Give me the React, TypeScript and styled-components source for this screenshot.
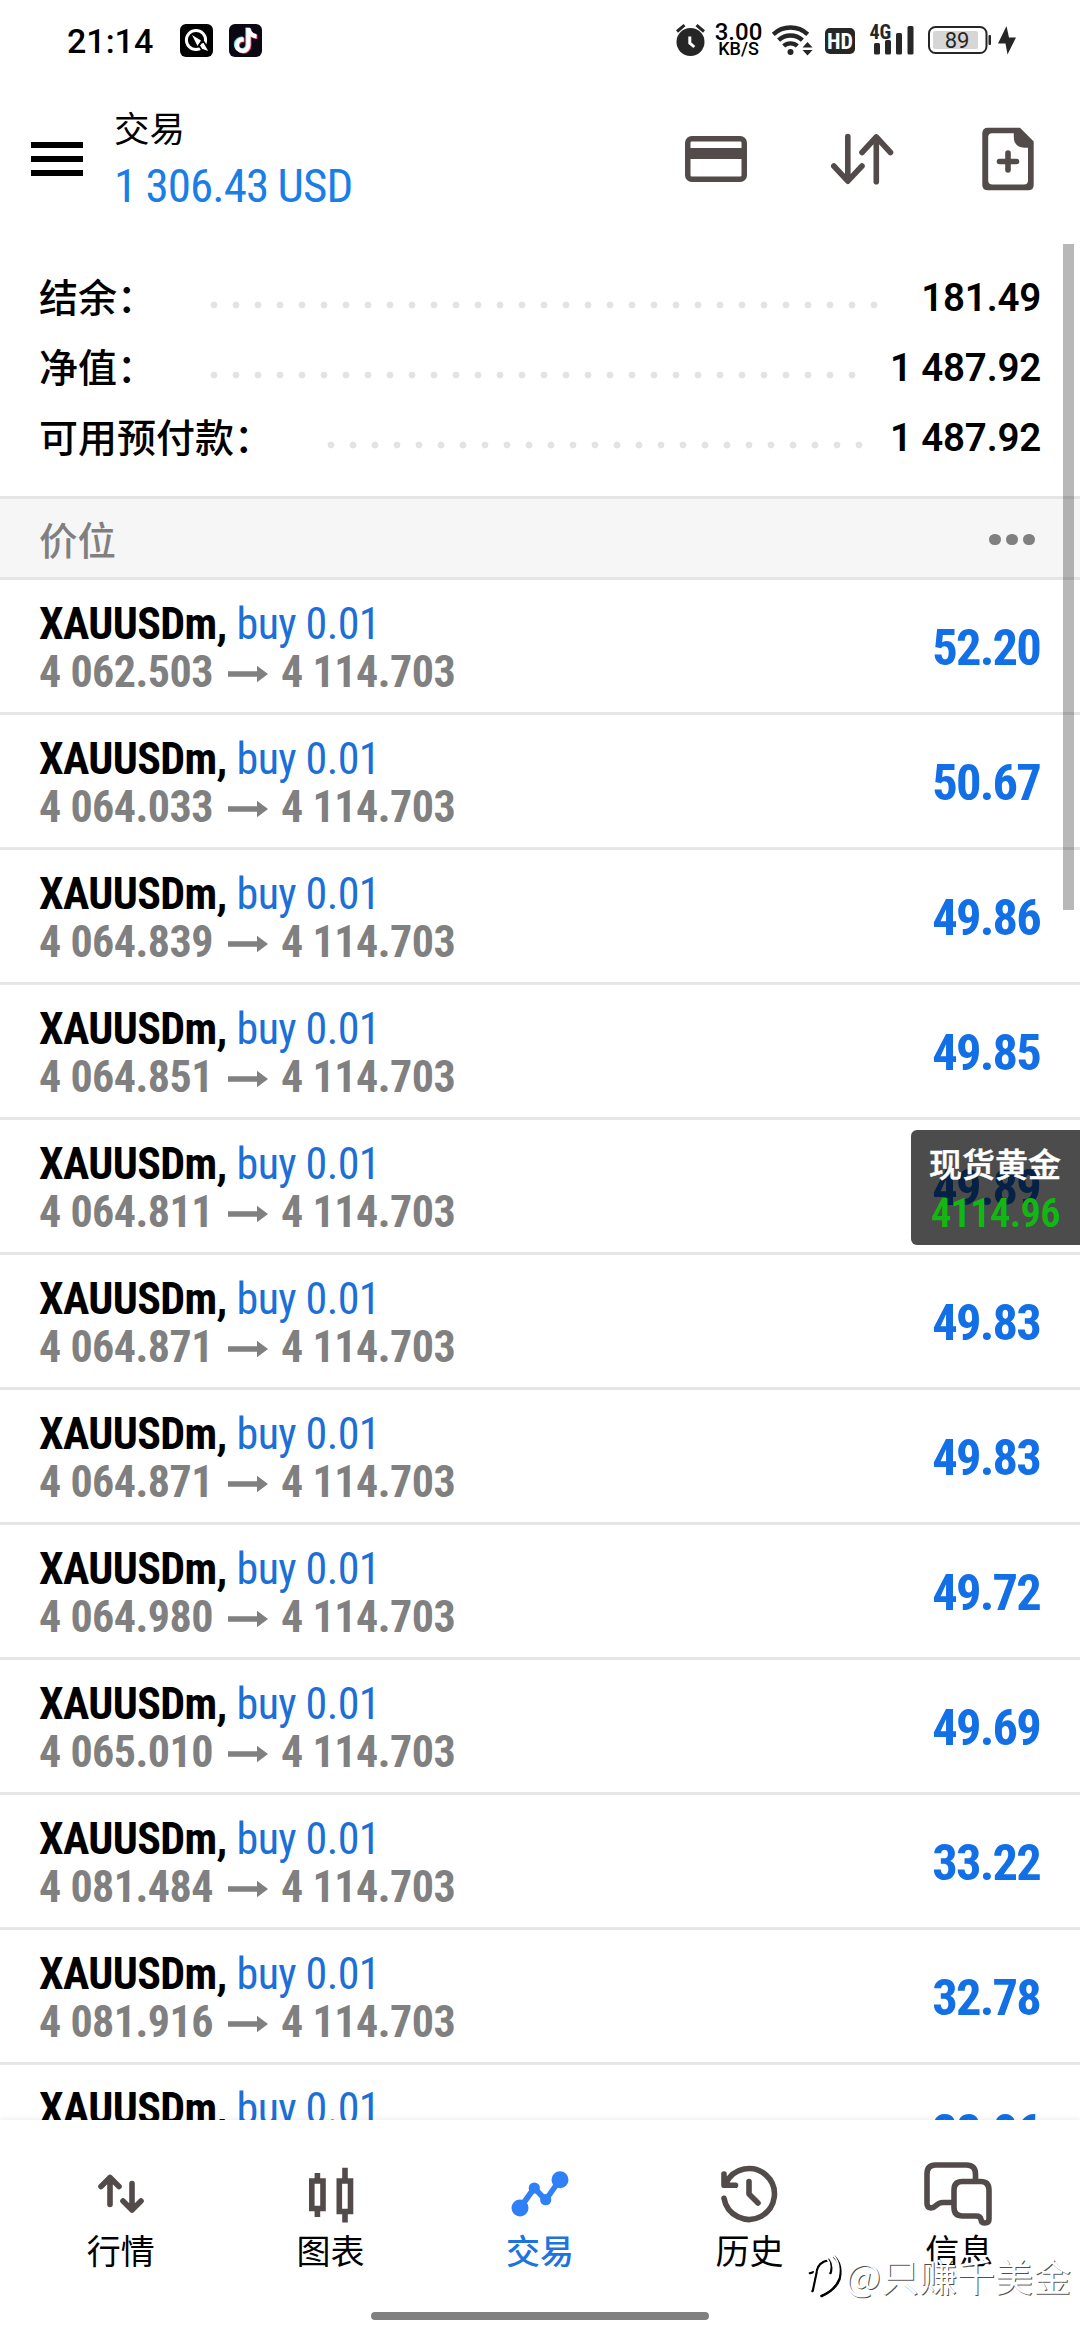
import React from "react";
import styled, { createGlobalStyle } from "styled-components";
import { FaTiktok } from "react-icons/fa6";

const CJK = `"Noto Sans CJK SC", sans-serif`;
const ROBOTO = `Roboto, "Noto Sans CJK SC", sans-serif`;
const CONDENSED = `"Roboto Condensed", Roboto, sans-serif`;
const BROWN = "#534b49";
const INK = "#262626";

const GlobalStyle = createGlobalStyle`
  * { box-sizing: border-box; }
  body { margin: 0; background: #fff; }
  svg { display: block; flex: none; overflow: visible; }
`;

const Screen = styled.div`
  position: relative;
  width: 1080px;
  height: 2340px;
  display: flex;
  flex-direction: column;
  overflow: hidden;
  background: #fff;
  font-family: ${ROBOTO};
  color: #000;
`;

/* Status bar */
const StatusBar = styled.div`
  height: 80px;
  padding: 0 64px 0 67px;
  display: flex;
  align-items: center;
  justify-content: space-between;
`;
const StatusGroup = styled.div<{ $gap: number }>`
  display: flex;
  align-items: center;
  gap: ${(p) => p.$gap}px;
`;
const Clock = styled.span`
  width: 97px;
  font-size: 34px;
  font-weight: 460;
  line-height: 40px;
  padding-top: 2px;
`;
const Speed = styled.div`
  width: 47px;
  display: flex;
  flex-direction: column;
  align-items: center;
  font-weight: 500;
  white-space: nowrap;
`;
const SpeedValue = styled.span`
  font-size: 24px;
  line-height: 18px;
`;
const SpeedUnit = styled.span`
  font-size: 18px;
  line-height: 16px;
`;

/* Header */
const Header = styled.header`
  height: 158px;
  padding: 0 46px 0 31px;
  display: flex;
  align-items: center;
`;
const MenuButton = styled.div`
  width: 52px;
  display: flex;
  flex-direction: column;
  gap: 8.5px;
`;
const MenuLine = styled.div`
  height: 5.7px;
  background: #000;
`;
const TitleBlock = styled.div`
  flex: 1;
  margin-left: 31px;
`;
const Title = styled.div`
  font: 400 35.5px/46px ${CJK};
  margin-bottom: 8px;
`;
const Profit = styled.div`
  font: 450 47px/56px ${CONDENSED};
  letter-spacing: -0.95px;
  word-spacing: -0.5px;
  color: #1a7ee6;
`;
const Actions = styled.div`
  display: flex;
  align-items: center;
  gap: 84px;
`;

/* Account summary */
const Content = styled.main`
  flex: 1;
  min-height: 0;
  overflow: hidden;
`;
const Summary = styled.section`
  height: 258px;
  padding: 24px 39px 0;
`;
const SummaryRow = styled.div`
  height: 70px;
  display: flex;
  align-items: center;
`;
const SummaryLabel = styled.span`
  font: 500 39px/66px ${CJK};
  padding-bottom: 4px;
`;
const Leader = styled.span<{ $dots: number }>`
  width: ${(p) => p.$dots * 22}px;
  height: 8px;
  margin: 15px 0 0 47px;
  background: radial-gradient(circle at center, #e3e3e3 3px, transparent 3.8px) 0 0 / 22px 8px repeat-x;
`;
const SummaryValue = styled.span`
  margin-left: auto;
  font-size: 38.5px;
  font-weight: 620;
  line-height: 70px;
  letter-spacing: -0.2px;
  padding-top: 2px;
`;

/* Positions */
const SectionBar = styled.div`
  height: 84px;
  padding: 0 45px 0 39px;
  display: flex;
  align-items: center;
  justify-content: space-between;
  background: #f6f6f6;
  border-top: 3px solid #e5e5e5;
  border-bottom: 3px solid #e5e5e5;
  font: 500 38.5px/70px ${CJK};
  color: #808080;
`;
const Dots = styled.div`
  display: flex;
  gap: 5.4px;
  padding-top: 3px;
`;
const Dot = styled.i`
  width: 11.6px;
  height: 11.6px;
  border-radius: 50%;
  background: #808080;
`;
const Position = styled.div`
  height: 135px;
  padding: 20px 40px 0 39px;
  display: flex;
  justify-content: space-between;
  border-bottom: 3px solid #e6e6e6;
  font-family: ${CONDENSED};
`;
const PositionLine = styled.div`
  display: flex;
  align-items: center;
  font-size: 44px;
  line-height: 48px;
  white-space: nowrap;
`;
const Symbol = styled.span`
  font-weight: 700;
  letter-spacing: -0.65px;
`;
const Side = styled.span`
  margin-left: 10px;
  font-weight: 440;
  letter-spacing: -0.6px;
  color: #1b6fd6;
`;
const Prices = styled(PositionLine)`
  font-weight: 700;
  letter-spacing: -0.5px;
  color: #808080;
`;
const PriceArrow = styled.svg`
  margin: 3px 13px 0 15px;
`;
const Pnl = styled.div`
  font-size: 50.5px;
  font-weight: 700;
  line-height: 96px;
  letter-spacing: -1.8px;
  color: #126fe6;
`;

/* Overlays */
const ScrollThumb = styled.div`
  position: absolute;
  right: 6px;
  top: 244px;
  width: 11px;
  height: 666px;
  background: rgba(0, 0, 0, 0.28);
`;
const QuoteWidget = styled.div`
  position: absolute;
  right: 0;
  top: 1130px;
  width: 169px;
  height: 115px;
  padding: 9px 0 0 18px;
  border-radius: 6px 0 0 6px;
  background: rgba(0, 0, 0, 0.7);
`;
const QuoteName = styled.div`
  font: 500 33px/48px ${CJK};
  -webkit-text-stroke: 0.5px #fff;
  color: #fff;
`;
const QuotePrice = styled.div`
  font: 600 40.5px/50px ${CONDENSED};
  letter-spacing: -0.7px;
  padding: 1px 0 0 2px;
  color: #12b812;
`;

/* Bottom navigation */
const Nav = styled.nav`
  position: relative;
  height: 220px;
  padding: 42px 16px 0;
  display: grid;
  grid-template-columns: repeat(5, 1fr);
  align-content: start;
  background: #fff;
  box-shadow: 0 -1px 6px rgba(0, 0, 0, 0.08);
`;
const Tab = styled.div<{ $active?: boolean }>`
  display: flex;
  flex-direction: column;
  align-items: center;
  font: ${(p) => (p.$active ? 500 : 400)} 34px/46px ${CJK};
  color: ${(p) => (p.$active ? "#1f73dc" : "#000")};
`;
const HomeBar = styled.div`
  position: absolute;
  left: 371px;
  bottom: 20px;
  width: 338px;
  height: 8px;
  border-radius: 4px;
  background: #808080;
`;
const Watermark = styled.div`
  position: absolute;
  right: 9px;
  bottom: 37px;
  display: flex;
  align-items: center;
  font: 400 38px/56px ${CJK};
  color: #fff;
  text-shadow: 1px 1px 0 rgba(0, 0, 0, 0.7);
  white-space: nowrap;
`;

const AppQ = () => (
  <svg width="33" height="33" viewBox="0 0 33 33">
    <rect width="33" height="33" rx="6" fill="#000" />
    <circle cx="16" cy="16" r="9.6" fill="none" stroke="#fff" strokeWidth="3" />
    <path d="M12 11l9 5.5-3.5 5.5z" fill="#fff" />
    <path d="M19 21.5q2-3.5 5-3.5l6 10.5-8.5-3z" fill="#fff" stroke="#000" strokeWidth="1.6" />
  </svg>
);
const AppNote = () => (
  <svg width="33" height="33" viewBox="0 0 33 33">
    <rect width="33" height="33" rx="6" fill="#0b0814" />
    <FaTiktok x="3.2" y="3.4" size={25} color="#4fdcd8" />
    <FaTiktok x="5" y="4.8" size={25} color="#e83a63" />
    <FaTiktok x="4.1" y="4.1" size={25} color="#fff" />
  </svg>
);
const Alarm = () => (
  <svg width="29" height="36" viewBox="0 0 29 36">
    <circle cx="14.5" cy="20" r="14" fill={INK} />
    <path d="M1 9.5L8.5 3.2M28 9.5L20.5 3.2" stroke={INK} strokeWidth="3" fill="none" />
    <path d="M13.8 14.5v6.5l4.5 4" stroke="#fff" strokeWidth="3" fill="none" />
  </svg>
);
const Wifi = () => (
  <svg width="41" height="36" viewBox="0 0 41 36">
    <g fill="none" stroke={INK} strokeWidth="4.4">
      <path d="M1.3 12.3a25.3 25.3 0 0 1 34.4 0" />
      <path d="M6.6 18.2a17.5 17.5 0 0 1 23.8 0" />
      <path d="M11.7 24a10 10 0 0 1 13.6 0" />
    </g>
    <circle cx="18.5" cy="30" r="3" fill={INK} />
    <path d="M35.5 20l5 5.5h-10zM35.5 33.5l5-5.5h-10z" fill={INK} />
  </svg>
);
const HdText = styled.span`
  width: 30px;
  height: 26px;
  margin: 2px 0 0 2px;
  border-radius: 5px;
  background: ${INK};
  color: #fff;
  font: 700 22px/27px ${CONDENSED};
  text-align: center;
`;
const Signal = () => (
  <svg width="49" height="36" viewBox="0 0 49 36">
    <text x="4.5" y="16.5" fontFamily="Roboto Condensed" fontWeight="700" fontSize="20" fill={INK}>4G</text>
    <g fill={INK}>
      <rect x="9" y="21" width="6" height="11.5" rx="1.5" />
      <rect x="20" y="18" width="6" height="14.5" rx="1.5" />
      <rect x="31" y="11" width="6" height="21.5" rx="1.5" />
      <rect x="42.5" y="4" width="6" height="28.5" rx="1.5" />
    </g>
  </svg>
);
const Battery = () => (
  <svg width="64" height="36" viewBox="0 0 64 36">
    <rect x="5" y="5" width="57.5" height="26" rx="6.5" fill="none" stroke={INK} strokeWidth="2" />
    <rect x="9" y="9" width="45" height="18" rx="2" fill="#d6d6d6" />
    <rect x="64.5" y="13" width="2.5" height="10" rx="1" fill={INK} />
    <text x="33" y="26" textAnchor="middle" fontFamily="Roboto" fontWeight="450" fontSize="22" fill={INK}>89</text>
  </svg>
);
const Bolt = () => (
  <svg width="18" height="36" viewBox="0 0 18 36">
    <path d="M8.5 4L0 21.5h7.5L9.5 32.5 18 15.5h-7z" fill={INK} />
  </svg>
);

const CardIcon = () => (
  <svg width="62" height="46" viewBox="0 0 62 46">
    <rect x="2.75" y="2.75" width="56.5" height="40.5" rx="4" fill="none" stroke={BROWN} strokeWidth="5.5" />
    <rect x="3" y="12" width="56" height="11" fill={BROWN} />
  </svg>
);
const SortIcon = () => (
  <svg width="62" height="52" viewBox="0 0 62 52" fill="none" stroke={BROWN} strokeWidth="5.6" strokeLinecap="round" strokeLinejoin="round">
    <path d="M16.8 3.5v44.5M2.8 33l14 15.2L31 33" />
    <path d="M45.3 48.7V4M31 19.5L45.3 4l14.2 15.5" />
  </svg>
);
const NewOrderIcon = () => (
  <svg width="57" height="64" viewBox="-5 0 57 64">
    <path
      fill={BROWN}
      fillRule="evenodd"
      d="M6 .7H38L51.7 14.5V58q0 5.3-5.5 5.3H6Q.3 63.3.3 58V6.5Q.3.7 6 .7zM10 6.2Q6.2 6.2 6.2 10V53.5Q6.2 57.5 10.5 57.5H42Q46 57.5 46 53.5V20.7H42Q31.8 20 31.8 10V6.2z"
    />
    <path d="M17.5 34.5h17M26 26v17" stroke={BROWN} strokeWidth="5.6" strokeLinecap="round" />
  </svg>
);

const Icon = ({ children, color = BROWN }: { children: React.ReactNode; color?: string }) => (
  <svg width="70" height="65" viewBox="-5 0 70 65" fill="none" stroke={color} strokeWidth="5.6" strokeLinecap="round" strokeLinejoin="round">
    {children}
  </svg>
);

const tabs = [
  {
    label: "行情",
    icon: (
      <Icon>
        <path d="M19 42.5V15.5M10 24.5l9-9 9 9M41 21.5V48M32 39l9 9 9-9" />
      </Icon>
    ),
  },
  {
    label: "图表",
    icon: (
      <Icon>
        <g strokeLinecap="butt" strokeLinejoin="miter">
          <path d="M17.4 11v6M17.4 48v7M45 5.7V17M45 51v9.5" />
          <path d="M11.8 19h11.2v27.5H11.8zM39.3 19h11.2v30.5H39.3z" />
        </g>
      </Icon>
    ),
  },
  {
    label: "交易",
    active: true,
    icon: (
      <Icon color="#2f80f7">
        <path d="M10 46L24.3 26l11.4 12L50 17.7" />
        <g fill="#2f80f7" stroke="none">
          <circle cx="10" cy="46" r="8.5" />
          <circle cx="24.3" cy="26" r="5.6" />
          <circle cx="35.7" cy="37.7" r="5.6" />
          <circle cx="50" cy="17.7" r="8.5" />
        </g>
      </Icon>
    ),
  },
  {
    label: "历史",
    icon: (
      <Icon>
        <path d="M4 36.3A25.4 25.4 0 1 0 5.9 21.5M4 12v11.3h11.5M29 19.5V32l9 9" />
      </Icon>
    ),
  },
  {
    label: "信息",
    icon: (
      <Icon>
        <g transform="translate(-5 0)">
          <path d="M51.5 17v-5q0-9-9-9H11.5Q3 3 3 12v29.5q0 4 4 4.5 2.5 0 5-2.500 3-3 7-3H28" />
          <path d="M38.5 19.5h18q8.5 0 8.5 8.5v29q0 4-4 4-3.5 0-4-3.5-.5-3.5-5-3.5H38.5Q30 54 30 45.5V28q0-8.5 8.5-8.5z" />
        </g>
      </Icon>
    ),
  },
];

const summary = [
  { label: "结余：", value: "181.49", dots: 31 },
  { label: "净值：", value: "1 487.92", dots: 30 },
  { label: "可用预付款：", value: "1 487.92", dots: 25 },
];

const positions = [
  ["4 062.503", "52.20"],
  ["4 064.033", "50.67"],
  ["4 064.839", "49.86"],
  ["4 064.851", "49.85"],
  ["4 064.811", "49.89"],
  ["4 064.871", "49.83"],
  ["4 064.871", "49.83"],
  ["4 064.980", "49.72"],
  ["4 065.010", "49.69"],
  ["4 081.484", "33.22"],
  ["4 081.916", "32.78"],
  ["4 081.840", "32.86"],
];

export default function App() {
  return (
    <Screen>
      <GlobalStyle />
      <StatusBar>
        <StatusGroup $gap={16}>
          <Clock>21:14</Clock>
          <AppQ />
          <AppNote />
        </StatusGroup>
        <StatusGroup $gap={10}>
          <Alarm />
          <Speed>
            <SpeedValue>3.00</SpeedValue>
            <SpeedUnit>KB/S</SpeedUnit>
          </Speed>
          <Wifi />
          <HdText>HD</HdText>
          <Signal />
          <Battery />
          <Bolt />
        </StatusGroup>
      </StatusBar>

      <Header>
        <MenuButton>
          <MenuLine />
          <MenuLine />
          <MenuLine />
        </MenuButton>
        <TitleBlock>
          <Title>交易</Title>
          <Profit>1 306.43 USD</Profit>
        </TitleBlock>
        <Actions>
          <CardIcon />
          <SortIcon />
          <NewOrderIcon />
        </Actions>
      </Header>

      <Content>
        <Summary>
          {summary.map((s) => (
            <SummaryRow key={s.label}>
              <SummaryLabel>{s.label}</SummaryLabel>
              <Leader $dots={s.dots} />
              <SummaryValue>{s.value}</SummaryValue>
            </SummaryRow>
          ))}
        </Summary>
        <SectionBar>
          价位
          <Dots>
            <Dot />
            <Dot />
            <Dot />
          </Dots>
        </SectionBar>
        {positions.map(([open, pnl], i) => (
          <Position key={i}>
            <div>
              <PositionLine>
                <Symbol>XAUUSDm,</Symbol>
                <Side>buy 0.01</Side>
              </PositionLine>
              <Prices>
                {open}
                <PriceArrow width="40" height="18" viewBox="0 0 40 18">
                  <path d="M0 6.3h29V.8l11 8.200-11 8.200v-5.500H0z" fill="#808080" />
                </PriceArrow>
                4 114.703
              </Prices>
            </div>
            <Pnl>{pnl}</Pnl>
          </Position>
        ))}
      </Content>

      <Nav>
        {tabs.map((t) => (
          <Tab key={t.label} $active={t.active}>
            {t.icon}
            {t.label}
          </Tab>
        ))}
        <HomeBar />
        <Watermark>
          <svg width="37" height="48" viewBox="0 0 37 48" fill="none" strokeLinecap="round">
            <path d="M4.500 40l4-19M2 22l6.500-2q2-9 12-11 4 5 2 13M26.500 6q8 8 5 22-4 11-18 17" stroke="#000" strokeWidth="2.6" />
            <path d="M3 38.500l4-19M1 20.500l6-2q2-9 12-11 4 5 2 13M25 4q8 8 5 22-4 11-18 17" stroke="#fff" strokeWidth="1.8" />
          </svg>
          @只赚千美金
        </Watermark>
      </Nav>

      <ScrollThumb />
      <QuoteWidget>
        <QuoteName>现货黄金</QuoteName>
        <QuotePrice>4114.96</QuotePrice>
      </QuoteWidget>
    </Screen>
  );
}
